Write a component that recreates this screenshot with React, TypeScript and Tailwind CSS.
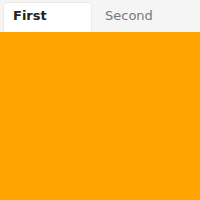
export default function App() {
  return (
    <div className="w-[200px] h-[200px] flex flex-col bg-[#ffa500]" style={{ fontFamily: '"DejaVu Sans", sans-serif' }}>
      <div className="h-[32px] flex items-end bg-[#f5f5f5] pl-[3px]">
        <div className="w-[89px] h-[30px] bg-white rounded-t-[5px] border border-b-0 border-[#ebebeb] pt-[5px] pl-[9px] text-[13px] leading-[15px] font-bold text-[#222]">
          First
        </div>
        <div className="w-[89px] h-[30px] pt-[6px] pl-[13px] text-[13px] leading-[15px] text-[#777]">
          Second
        </div>
      </div>
      <div className="flex-1 bg-[#ffa500]" />
    </div>
  )
}
